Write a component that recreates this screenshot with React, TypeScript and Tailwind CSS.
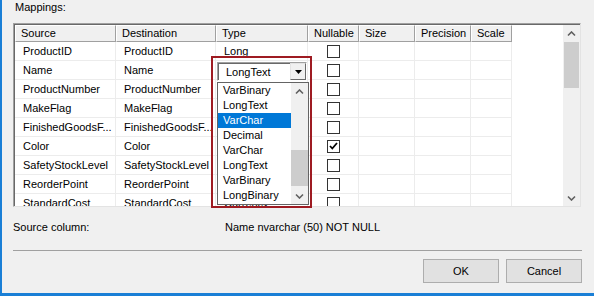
import { ReactNode } from "react";

type Row = {
  src: string;
  dst: string;
  type: string;
  nullable: boolean;
  editing?: boolean;
};

// type cells hidden under the open list are left blank
const rows: Row[] = [
  { src: "ProductID", dst: "ProductID", type: "Long", nullable: false },
  { src: "Name", dst: "Name", type: "LongText", nullable: false, editing: true },
  { src: "ProductNumber", dst: "ProductNumber", type: "", nullable: false },
  { src: "MakeFlag", dst: "MakeFlag", type: "", nullable: false },
  { src: "FinishedGoodsF...", dst: "FinishedGoodsF...", type: "", nullable: false },
  { src: "Color", dst: "Color", type: "", nullable: true },
  { src: "SafetyStockLevel", dst: "SafetyStockLevel", type: "", nullable: false },
  { src: "ReorderPoint", dst: "ReorderPoint", type: "", nullable: false },
  { src: "StandardCost", dst: "StandardCost", type: "Currency", nullable: false },
];

const typeOptions = ["VarBinary", "LongText", "VarChar", "Decimal", "VarChar", "LongText", "VarBinary", "LongBinary"];

function Chevron({ down = false }: { down?: boolean }) {
  return (
    <svg width="9" height="6" viewBox="0 0 9 6">
      <polyline
        points={down ? "1,1.5 4.5,5 8,1.5" : "1,4.5 4.5,1 8,4.5"}
        fill="none"
        stroke="#606060"
        strokeWidth="1.6"
      />
    </svg>
  );
}

function Checkbox({ checked }: { checked: boolean }) {
  return (
    <div className="w-[13px] h-[13px] border border-[#333333] bg-white flex items-center justify-center">
      {checked && (
        <svg width="9" height="8" viewBox="0 0 9 8">
          <path d="M1 4 L3.3 6.5 L8 1" fill="none" stroke="#000" strokeWidth="1.8" />
        </svg>
      )}
    </div>
  );
}

function HeaderCell({ w, children }: { w: string; children?: ReactNode }) {
  return (
    <div
      className={`${w} h-[17px] shrink-0 bg-[#f0f0f0] border border-t-white border-l-white border-r-[#a0a0a0] border-b-[#a0a0a0] pl-[5px] leading-[15px] whitespace-nowrap overflow-hidden`}
    >
      {children}
    </div>
  );
}

function Cell({ w, children, center = false }: { w: string; children?: ReactNode; center?: boolean }) {
  return (
    <div
      className={`${w} h-[19px] shrink-0 border-r border-b border-[#ececec] leading-[18px] whitespace-nowrap overflow-hidden ${
        center ? "flex items-center justify-center" : "pl-[8px]"
      }`}
    >
      {children}
    </div>
  );
}

function TypeEditor() {
  return (
    <div className="relative w-[92px] h-[19px] shrink-0 border-r border-b border-[#ececec]">
      {/* combobox in edit mode */}
      <div className="absolute left-[1px] top-[1px] w-[90px] h-[19px] z-10 flex bg-white border border-t-[#a0a0a0] border-l-[#a0a0a0] border-r-white border-b-white">
        <div className="flex-1 pl-[7px] leading-[17px] border-t border-l border-[#696969]">LongText</div>
        <div className="w-[16px] bg-[#f0f0f0] border border-t-[#e3e3e3] border-l-[#e3e3e3] border-r-[#696969] border-b-[#696969] flex items-center justify-center">
          <svg width="7" height="4" viewBox="0 0 7 4">
            <polygon points="0,0 7,0 3.5,4" fill="#000" />
          </svg>
        </div>
      </div>

      {/* open list */}
      <div className="absolute left-[1px] top-[21px] w-[92px] h-[123px] z-20 bg-white border border-[#646464] flex">
        <div className="w-[73px]">
          {typeOptions.map((opt, i) => (
            <div
              key={i}
              className={`h-[15px] leading-[15px] pl-[5px] ${i === 2 ? "bg-[#0078d7] text-white" : "text-black"}`}
            >
              {opt}
            </div>
          ))}
        </div>
        <div className="flex-1 bg-[#f0f0f0] flex flex-col">
          <div className="h-[17px] flex items-center justify-center">
            <Chevron />
          </div>
          <div className="flex-1">
            <div className="mt-[50px] h-[36px] bg-[#cdcdcd]" />
          </div>
          <div className="h-[17px] flex items-center justify-center">
            <Chevron down />
          </div>
        </div>
      </div>
    </div>
  );
}

export default function App() {
  return (
    <div className="relative w-[594px] h-[296px] bg-[#f0f0f0] border-l-2 border-b-[3px] border-[#1a7fd6] text-[11px] text-black font-['Liberation_Sans',Arial,sans-serif] overflow-hidden">
      <div className="h-[23px] pt-[1px] pl-[13px] leading-[12px]">Mappings:</div>

      {/* grid */}
      <div className="ml-[11px] w-[568px] h-[184px] border border-t-[#a0a0a0] border-l-[#a0a0a0] border-r-[#e3e3e3] border-b-[#e3e3e3]">
        <div className="h-full border-t border-l border-[#696969] flex bg-white">
          <div className="w-[548px] flex flex-col">
            <div className="flex">
              <HeaderCell w="w-[101px]">Source</HeaderCell>
              <HeaderCell w="w-[100px]">Destination</HeaderCell>
              <HeaderCell w="w-[92px]">Type</HeaderCell>
              <HeaderCell w="w-[51px]">Nullable</HeaderCell>
              <HeaderCell w="w-[56px]">Size</HeaderCell>
              <HeaderCell w="w-[56px]">Precision</HeaderCell>
              <HeaderCell w="w-[41px]">Scale</HeaderCell>
              <div className="flex-1 h-[17px] bg-white" />
            </div>
            <div className="flex-1 overflow-hidden">
              {rows.map((r) => (
                <div key={r.src} className="flex">
                  <Cell w="w-[101px]">{r.src}</Cell>
                  <Cell w="w-[100px]">{r.dst}</Cell>
                  {r.editing ? <TypeEditor /> : <Cell w="w-[92px]">{r.type}</Cell>}
                  <Cell w="w-[51px]" center>
                    <Checkbox checked={r.nullable} />
                  </Cell>
                  <Cell w="w-[56px]" />
                  <Cell w="w-[56px]" />
                  <Cell w="w-[41px]" />
                </div>
              ))}
            </div>
          </div>
          <div className="w-[17px] bg-[#f0f0f0] flex flex-col">
            <div className="h-[17px] flex items-center justify-center">
              <Chevron />
            </div>
            <div className="flex-1">
              <div className="mx-[1px] h-[46px] bg-[#cdcdcd]" />
            </div>
            <div className="h-[17px] flex items-center justify-center">
              <Chevron down />
            </div>
          </div>
        </div>
      </div>

      {/* source column info */}
      <div className="mt-[13px] pl-[11px] flex leading-[14px]">
        <div className="w-[212px]">Source column:</div>
        <div>Name nvarchar (50) NOT NULL</div>
      </div>

      <div className="mt-[16px] ml-[11px] w-[569px] h-px bg-[#a0a0a0]" />

      <div className="mt-[8px] pr-[12px] flex justify-end gap-[7px]">
        <button className="w-[76px] h-[24px] bg-[#e1e1e1] border border-[#adadad] text-[11px]">OK</button>
        <button className="w-[76px] h-[24px] bg-[#e1e1e1] border border-[#adadad] text-[11px]">Cancel</button>
      </div>

      {/* highlight annotation */}
      <div className="absolute left-[209px] top-[56px] w-[101px] h-[152px] border-2 border-[#9e1b22] z-30 pointer-events-none" />
    </div>
  );
}
